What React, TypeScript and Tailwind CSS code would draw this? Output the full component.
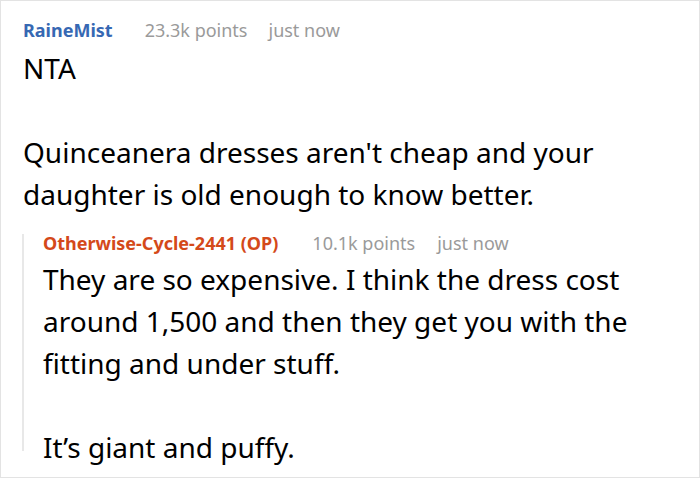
import React from "react";

export default function App() {
  return (
    <div className="w-[700px] h-[478px] bg-white overflow-hidden font-['Noto_Sans','Open_Sans',sans-serif]">
      <div className="h-full border border-[#e3e3e3] pl-[22px] pr-4 pt-[14px]">
        <div className="flex items-baseline text-[18px] leading-[30px] whitespace-nowrap">
          <span className="font-bold text-[#3668b3]">RaineMist</span>
          <span className="ml-[32px] text-[#9a9a9a]">23.3k points</span>
          <span className="ml-[21px] text-[#9a9a9a]">just now</span>
        </div>
        <div className="mt-[2px] text-[28px] leading-[42px] text-black">
          <p>NTA</p>
          <p className="h-[42px]"></p>
          <p>Quinceanera dresses aren't cheap and your daughter is old enough to know better.</p>
        </div>
        <div className="-ml-px mt-[27px] h-[217px] border-l-2 border-[#e8e8e8] pl-[19px]">
          <div className="-mt-[8px] flex items-baseline text-[18px] leading-[18px] whitespace-nowrap">
            <span className="font-bold text-[#d4491a]">Otherwise-Cycle-2441 (OP)</span>
            <span className="ml-[34px] text-[#9a9a9a]">10.1k points</span>
            <span className="ml-[22px] text-[#9a9a9a]">just now</span>
          </div>
          <div className="mt-[6px] text-[28px] leading-[42px] text-black">
            <p>They are so expensive. I think the dress cost around 1,500 and then they get you with the fitting and under stuff.</p>
            <p className="h-[42px]"></p>
            <p>It’s giant and puffy.</p>
          </div>
        </div>
      </div>
    </div>
  );
}
